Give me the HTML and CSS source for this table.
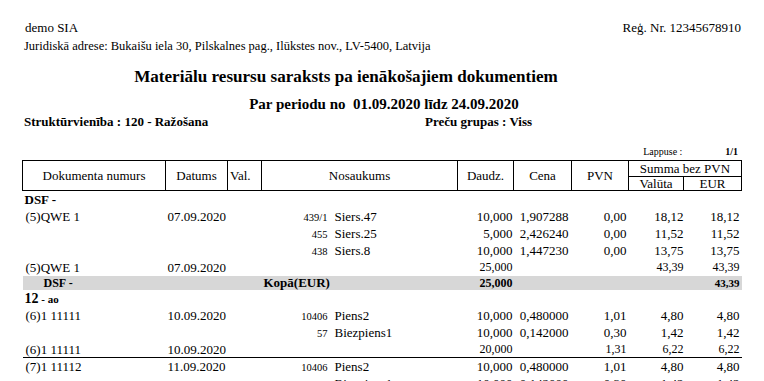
FILE: index.html
```html
<!DOCTYPE html>
<html lang="lv">
<head>
<meta charset="utf-8">
<title>Materiālu resursu saraksts</title>
<link rel="stylesheet" href="styles.css">
</head>
<body>
<div class="page">
  <div class="company">
    <span class="name">demo SIA</span>
    <span class="reg">Reģ. Nr. 12345678910</span>
  </div>
  <div class="address">Juridiskā adrese: Bukaišu iela 30, Pilskalnes pag., Ilūkstes nov., LV-5400, Latvija</div>
  <h1 class="title">Materiālu resursu saraksts pa ienākošajiem dokumentiem</h1>
  <div class="period">Par periodu no&nbsp; 01.09.2020 līdz 24.09.2020</div>
  <div class="filters">
    <span>Struktūrvienība : 120 - Ražošana</span>
    <span>Preču grupas : Viss</span>
  </div>
  <div class="pageno">
    <span class="pl">Lappuse :</span>
    <span class="pn">1/1</span>
  </div>
  <table class="report">
    <colgroup>
      <col class="c-doc"><col class="c-date"><col class="c-val"><col class="c-name">
      <col class="c-qty"><col class="c-price"><col class="c-vat"><col class="c-sv"><col class="c-se">
    </colgroup>
    <thead>
      <tr class="h1">
        <th rowspan="2">Dokumenta numurs</th>
        <th rowspan="2">Datums</th>
        <th rowspan="2" class="val">Val.</th>
        <th rowspan="2">Nosaukums</th>
        <th rowspan="2">Daudz.</th>
        <th rowspan="2">Cena</th>
        <th rowspan="2">PVN</th>
        <th colspan="2" class="sum">Summa bez PVN</th>
      </tr>
      <tr class="h2">
        <th>Valūta</th>
        <th>EUR</th>
      </tr>
    </thead>
    <tbody>
      <tr class="group"><td colspan="9"><b>DSF -</b></td></tr>
      <tr>
        <td class="doc">(5)QWE 1</td><td class="date">07.09.2020</td><td></td>
        <td class="nm"><span class="code">439/1</span><span class="item">Siers.47</span></td>
        <td class="num q">10,000</td><td class="num p">1,907288</td><td class="num v">0,00</td><td class="num sv">18,12</td><td class="num se">18,12</td>
      </tr>
      <tr>
        <td></td><td></td><td></td>
        <td class="nm"><span class="code">455</span><span class="item">Siers.25</span></td>
        <td class="num q">5,000</td><td class="num p">2,426240</td><td class="num v">0,00</td><td class="num sv">11,52</td><td class="num se">11,52</td>
      </tr>
      <tr>
        <td></td><td></td><td></td>
        <td class="nm"><span class="code">438</span><span class="item">Siers.8</span></td>
        <td class="num q">10,000</td><td class="num p">1,447230</td><td class="num v">0,00</td><td class="num sv">13,75</td><td class="num se">13,75</td>
      </tr>
      <tr class="sub">
        <td class="doc">(5)QWE 1</td><td class="date">07.09.2020</td><td></td><td></td>
        <td class="num q">25,000</td><td></td><td></td><td class="num sv">43,39</td><td class="num se tick">43,39</td>
      </tr>
      <tr class="total">
        <td class="tl">DSF -</td><td></td><td></td><td class="kopa">Kopā(EUR)</td>
        <td class="num q">25,000</td><td></td><td></td><td></td><td class="num se">43,39</td>
      </tr>
      <tr class="group"><td colspan="9"><b class="big">12</b><b class="small"> - ao</b></td></tr>
      <tr>
        <td class="doc">(6)1 11111</td><td class="date">10.09.2020</td><td></td>
        <td class="nm"><span class="code">10406</span><span class="item">Piens2</span></td>
        <td class="num q">10,000</td><td class="num p">0,480000</td><td class="num v">1,01</td><td class="num sv">4,80</td><td class="num se">4,80</td>
      </tr>
      <tr>
        <td></td><td></td><td></td>
        <td class="nm"><span class="code">57</span><span class="item">Biezpiens1</span></td>
        <td class="num q">10,000</td><td class="num p">0,142000</td><td class="num v">0,30</td><td class="num sv">1,42</td><td class="num se">1,42</td>
      </tr>
      <tr class="sub line">
        <td class="doc">(6)1 11111</td><td class="date">10.09.2020</td><td></td><td></td>
        <td class="num q">20,000</td><td></td><td class="num v">1,31</td><td class="num sv">6,22</td><td class="num se">6,22</td>
      </tr>
      <tr>
        <td class="doc">(7)1 11112</td><td class="date">11.09.2020</td><td></td>
        <td class="nm"><span class="code">10406</span><span class="item">Piens2</span></td>
        <td class="num q">10,000</td><td class="num p">0,480000</td><td class="num v">1,01</td><td class="num sv">4,80</td><td class="num se">4,80</td>
      </tr>
      <tr>
        <td></td><td></td><td></td>
        <td class="nm"><span class="code">57</span><span class="item">Biezpiens1</span></td>
        <td class="num q">10,000</td><td class="num p">0,142000</td><td class="num v">0,30</td><td class="num sv">1,42</td><td class="num se">1,42</td>
      </tr>
    </tbody>
  </table>
</div>
</body>
</html>
```

FILE: styles.css
```css
html, body {
  margin: 0;
  padding: 0;
  background: #fff;
}
body {
  font-family: "Liberation Serif", "Times New Roman", serif;
  font-size: 13px;
  color: #000;
  overflow: hidden;
}
.page {
  width: 764px;
  height: 381px;
  padding: 19px 22px 0 22px;
  box-sizing: border-box;
  overflow: hidden;
}
.company {
  display: flex;
  justify-content: space-between;
  line-height: 18px;
  font-size: 13px;
  padding-left: 3px;
  padding-right: 1px;
}
.address {
  line-height: 18px;
  font-size: 12.5px;
  padding-left: 2px;
}
.title {
  margin: 11px 0 0 0;
  font-size: 17.1px;
  line-height: 22px;
  font-weight: bold;
  text-align: center;
  padding-right: 72px;
}
.period {
  margin-top: 7px;
  font-size: 15px;
  line-height: 18px;
  font-weight: bold;
  text-align: center;
  padding-left: 4px;
}
.filters {
  display: grid;
  grid-template-columns: 401px auto;
  font-weight: bold;
  font-size: 13px;
  line-height: 18px;
  padding-left: 2px;
}
.pageno {
  margin-top: 15px;
  display: flex;
  justify-content: flex-end;
  font-size: 10px;
  line-height: 12px;
  height: 12px;
  margin-bottom: 2px;
}
.pageno .pl {
  width: 82px;
}
.pageno .pn {
  font-weight: bold;
  padding-right: 4px;
}
.report {
  border-collapse: collapse;
  table-layout: fixed;
  width: 720px;
  font-size: 13px;
}
.c-doc { width: 143px; }
.c-date { width: 62px; }
.c-val { width: 34px; }
.c-name { width: 196px; }
.c-qty { width: 56px; }
.c-price { width: 58px; }
.c-vat { width: 57px; }
.c-sv { width: 55px; }
.c-se { width: 58px; }

.report th {
  border: 1px solid #000;
  font-weight: normal;
  padding: 0;
  text-align: center;
  vertical-align: middle;
  white-space: nowrap;
}
.report .h1 th { height: 15px; }
.report .h2 th { height: 13px; line-height: 13px; }
.report .h1 th.sum { line-height: 15px; }
.report th.val { text-align: left; padding-left: 2px; }

.report td {
  padding: 0;
  height: 17px;
  line-height: 15px;
  white-space: nowrap;
  overflow: visible;
  vertical-align: middle;
}
.report td.doc { padding-left: 3px; }
.report td.date { padding-left: 2px; }
.report tr.group td { padding-left: 2px; }
.report .big { font-size: 14px; line-height: 12px; }
.report .small { font-size: 11px; line-height: 12px; }
.report td.nm { padding: 0; }
.code {
  display: inline-block;
  width: 66px;
  text-align: right;
  font-size: 10.5px;
  line-height: 11px;
}
.item { margin-left: 7px; }
.report td.num { text-align: right; }
.report td.q { padding-right: 1px; }
.report td.p { padding-right: 3px; }
.report td.v { padding-right: 2px; }
.report td.sv { padding-right: 0; }
.report td.se { padding-right: 2px; }

.report tr.sub td.num { font-size: 12px; }
.report tr.line td { border-bottom: 1px solid #000; height: 16px; }

.report tr.total td {
  background: #d7d7d7;
  height: 14px;
  line-height: 14px;
  font-weight: bold;
}
.report tr.total td.tl { padding-left: 21px; font-size: 12px; }
.report tr.total td.kopa { padding-left: 2px; }
.report tr.total td.q { font-size: 12px; }
.report tr.total td.se { font-size: 11px; }
```
